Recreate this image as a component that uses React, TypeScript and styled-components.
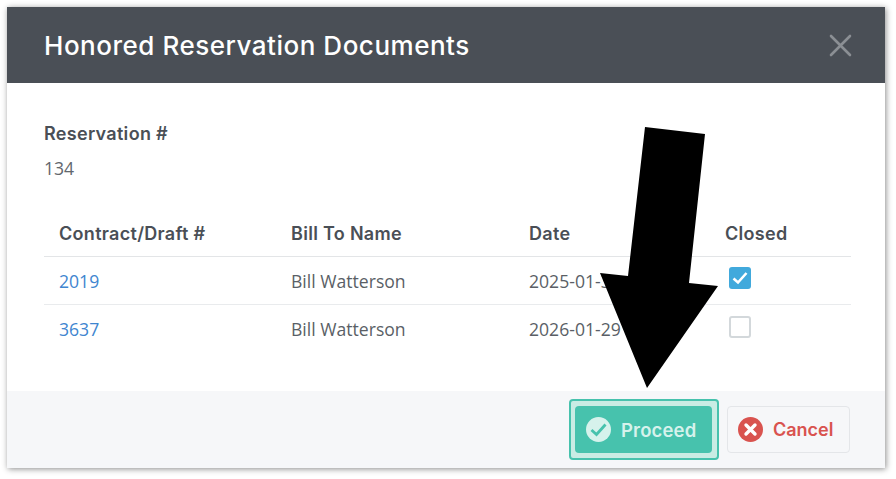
import React from "react";
import styled, { createGlobalStyle } from "styled-components";

const Global = createGlobalStyle`
  html, body { margin: 0; padding: 0; background: #fff; }
  body { font-family: "Open Sans", "Liberation Sans", sans-serif; }
`;

const Page = styled.div`
  position: relative;
  width: 896px;
  height: 479px;
  padding: 7px 11px 11px 7px;
  box-sizing: border-box;
  overflow: hidden;
`;

const Modal = styled.div`
  width: 878px;
  height: 461px;
  display: flex;
  flex-direction: column;
  background: #fff;
  box-shadow: 1px 1px 6px rgba(0, 0, 0, 0.45);
`;

const Header = styled.header`
  height: 76px;
  flex: none;
  display: flex;
  align-items: center;
  justify-content: space-between;
  padding: 0 33px 0 37px;
  background: #4a4f56;
`;

const Title = styled.h1`
  margin: 0;
  font-family: Inter, "Noto Sans", sans-serif;
  font-size: 26px;
  font-weight: 500;
  letter-spacing: 0.52px;
  color: #fff;
`;

const CloseIcon = styled.svg`
  width: 24px;
  height: 24px;
  display: block;
`;

const Body = styled.main`
  flex: 1;
  padding: 39px 34px 0 37px;
`;

const Label = styled.div`
  font-family: Inter, "Noto Sans", sans-serif;
  font-size: 18px;
  font-weight: 600;
  letter-spacing: 0.3px;
  line-height: 24px;
  color: #4a4f56;
`;

const Value = styled.div`
  margin-top: 10px;
  font-size: 17.6px;
  line-height: 24px;
  color: #62676d;
`;

const Table = styled.table`
  width: 807px;
  margin-top: 30px;
  table-layout: fixed;
  border-collapse: collapse;
`;

const Col = styled.col<{ $w: number }>`
  width: ${(p) => p.$w}px;
`;

const Th = styled.th`
  height: 46px;
  padding: 0 15px;
  text-align: left;
  font-family: Inter, "Noto Sans", sans-serif;
  font-size: 18px;
  font-weight: 600;
  letter-spacing: 0.3px;
  color: #4a4f56;
  border-bottom: 1px solid #e3e5e7;
`;

const Td = styled.td`
  height: 47px;
  padding: 0 15px;
  font-size: 17.6px;
  color: #5a5f66;
`;

const Row = styled.tr`
  & + & ${Td} {
    border-top: 1px solid #e9ebed;
  }
`;

const DocLink = styled.a`
  color: #3f86d0;
  text-decoration: none;
`;

const Check = styled.span<{ $on?: boolean }>`
  display: flex;
  align-items: center;
  justify-content: center;
  width: 22px;
  height: 22px;
  margin: ${(p) => (p.$on ? "-5px" : "-3px")} 0 0 4px;
  box-sizing: border-box;
  border-radius: 3px;
  background: ${(p) => (p.$on ? "#41a9dc" : "#fff")};
  border: ${(p) => (p.$on ? "none" : "2px solid #d3d8db")};
`;

const Footer = styled.footer`
  height: 77px;
  flex: none;
  display: flex;
  align-items: center;
  justify-content: flex-end;
  gap: 8px;
  padding: 0 35px 0 0;
  box-sizing: border-box;
  background: #f6f7f9;
`;

const ProceedRing = styled.div`
  width: 150px;
  height: 61px;
  box-sizing: border-box;
  display: flex;
  align-items: center;
  padding-left: 4px;
  border: 2px solid #47c2ad;
  border-radius: 4px;
  background: #c9ece4;
`;

const Button = styled.button`
  display: flex;
  align-items: center;
  height: 47px;
  box-sizing: border-box;
  border-radius: 4px;
  cursor: pointer;
  font-family: Inter, "Noto Sans", sans-serif;
  font-size: 18px;
  font-weight: 600;
  gap: 10px;
`;

const ProceedButton = styled(Button)`
  width: 137px;
  padding: 0 0 0 11px;
  border: none;
  background: #47c2ad;
  color: #d6f2ec;
  font-size: 18.5px;
  letter-spacing: 0.15px;
`;

const CancelButton = styled(Button)`
  width: 123px;
  padding: 0 0 0 10px;
  border: 1px solid #e4e6e9;
  background: #f6f7f9;
  color: #d9534f;
`;

const BtnIcon = styled.svg`
  width: 25px;
  height: 25px;
  flex: none;
  display: block;
`;

const Arrow = styled.svg`
  position: absolute;
  left: 0;
  top: 0;
  width: 896px;
  height: 479px;
  pointer-events: none;
`;

const rows = [
  { no: "2019", name: "Bill Watterson", date: "2025-01-30", closed: true },
  { no: "3637", name: "Bill Watterson", date: "2026-01-29", closed: false },
];

export default function App() {
  return (
    <Page>
      <Global />
      <Modal>
        <Header>
          <Title>Honored Reservation Documents</Title>
          <CloseIcon viewBox="0 0 24 24">
            <path d="M3 3 L22 22 M22 3 L3 22" stroke="#8b8f94" strokeWidth="2.6" strokeLinecap="round" />
          </CloseIcon>
        </Header>
        <Body>
          <Label>Reservation #</Label>
          <Value>134</Value>
          <Table>
            <colgroup>
              <Col $w={232} />
              <Col $w={238} />
              <Col $w={196} />
              <Col $w={141} />
            </colgroup>
            <thead>
              <tr>
                <Th>Contract/Draft #</Th>
                <Th>Bill To Name</Th>
                <Th>Date</Th>
                <Th>Closed</Th>
              </tr>
            </thead>
            <tbody>
              {rows.map((r) => (
                <Row key={r.no}>
                  <Td>
                    <DocLink href="#">{r.no}</DocLink>
                  </Td>
                  <Td>{r.name}</Td>
                  <Td>{r.date}</Td>
                  <Td>
                    <Check $on={r.closed}>
                      {r.closed && (
                        <svg width="16" height="14" viewBox="0 0 16 14">
                          <path d="M1.5 7.5 L6 11.5 L14.5 2" fill="none" stroke="#fff" strokeWidth="2.6" />
                        </svg>
                      )}
                    </Check>
                  </Td>
                </Row>
              ))}
            </tbody>
          </Table>
        </Body>
        <Footer>
          <ProceedRing>
            <ProceedButton>
              <BtnIcon viewBox="0 0 25 25">
                <circle cx="12.5" cy="12.5" r="12.5" fill="#d6f2ec" />
                <path d="M5.5 13 L10.5 17.5 L19.5 7.5" fill="none" stroke="#47c2ad" strokeWidth="2.8" />
              </BtnIcon>
              Proceed
            </ProceedButton>
          </ProceedRing>
          <CancelButton>
            <BtnIcon viewBox="0 0 25 25">
              <circle cx="12.5" cy="12.5" r="12.5" fill="#d9534f" />
              <path d="M8 8 L17 17 M17 8 L8 17" fill="none" stroke="#fff" strokeWidth="3.4" strokeLinecap="round" />
            </BtnIcon>
            Cancel
          </CancelButton>
        </Footer>
      </Modal>
      <Arrow viewBox="0 0 896 479">
        <polygon points="645,127 705,134 689,283 718,286 647,388 600,273 628,276" fill="#000" />
      </Arrow>
    </Page>
  );
}
